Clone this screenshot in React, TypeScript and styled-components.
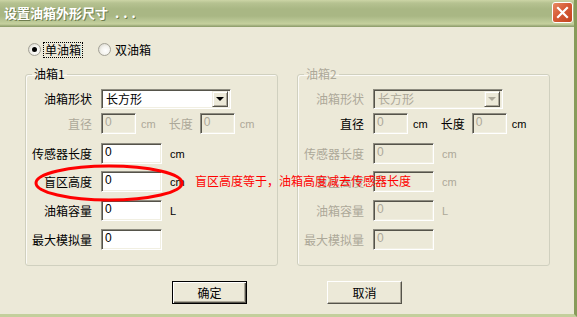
import React from "react";
import styled, { createGlobalStyle } from "styled-components";

const GlobalStyle = createGlobalStyle`
  html, body {
    margin: 0;
    padding: 0;
    background: #ece9d8;
  }
  body {
    font-family: "Noto Sans CJK SC", "Liberation Sans", sans-serif;
    font-size: 12px;
  }
`;

const Window = styled.div`
  position: relative;
  width: 577px;
  height: 317px;
  box-sizing: border-box;
  display: flex;
  flex-direction: column;
  background: #ece9d8;
  border-right: 3px solid #879b5a;
  border-bottom: 3px solid #c3cf9c;
  overflow: hidden;
`;

const TitleBar = styled.div`
  height: 27px;
  flex: none;
  box-sizing: border-box;
  display: flex;
  align-items: center;
  justify-content: space-between;
  padding: 0 1px 1px 4px;
  background: linear-gradient(
    to bottom,
    #ccd5a6 0px,
    #b6c291 3px,
    #a9b784 9px,
    #a9b784 16px,
    #bac795 21px,
    #c6d19e 24px,
    #9aa877 26px,
    #8c9b68 27px
  );
`;

const Title = styled.span`
  color: #fff;
  font-weight: bold;
  font-size: 13px;
  line-height: 16px;
  text-shadow: 1px 1px 0 #6f7d4f;
  white-space: pre;
`;

const TitleDots = styled.span`
  margin-left: 7px;
  letter-spacing: 4px;
`;

const CloseButton = styled.div`
  width: 21px;
  height: 21px;
  margin-bottom: 2px;
  box-sizing: border-box;
  border: 1px solid #fff;
  border-radius: 3px;
  background: linear-gradient(135deg, #e88a64 0%, #d65b36 45%, #c2441f 100%);
  display: flex;
  align-items: center;
  justify-content: center;
`;

const Body = styled.div`
  flex: 1;
  display: flex;
  flex-direction: column;
  padding-top: 14px;
`;

const RadioRow = styled.div`
  display: flex;
  align-items: center;
  height: 17px;
  padding-left: 28px;
  gap: 16px;
`;

const RadioItem = styled.label`
  display: flex;
  align-items: center;
  gap: 3px;
`;

const RadioCircle = styled.span<{ $checked?: boolean }>`
  width: 13px;
  height: 13px;
  box-sizing: border-box;
  border-radius: 50%;
  border: 1px solid #a3a196;
  background: radial-gradient(circle at 60% 60%, #ffffff 0%, #f4f3ee 45%, #cfcdc2 100%);
  display: flex;
  align-items: center;
  justify-content: center;
  &::after {
    content: "";
    display: ${(p) => (p.$checked ? "block" : "none")};
    width: 5px;
    height: 5px;
    border-radius: 50%;
    background: #000;
  }
`;

const RadioText = styled.span<{ $focused?: boolean }>`
  line-height: 14px;
  padding: 0 1px;
  color: #000;
  outline: ${(p) => (p.$focused ? "1px dotted #000" : "none")};
  outline-offset: 0;
`;

const GroupsRow = styled.div`
  display: flex;
  gap: 19px;
  padding-left: 25px;
  margin-top: 9px;
`;

const Group = styled.fieldset`
  width: 253px;
  height: 199px;
  box-sizing: border-box;
  margin: 0;
  padding: 0;
  border: 1px solid #d0d0bf;
  border-radius: 3px;
  box-shadow: inset 1px 1px 0 #fbfaf6;
  display: flex;
  flex-direction: column;
`;

const Legend = styled.legend<{ $disabled?: boolean }>`
  margin-left: 6px;
  padding: 0 2px;
  font-size: 12px;
  line-height: 14px;
  color: ${(p) => (p.$disabled ? "#aca899" : "#000")};
`;

const FormRow = styled.div<{ $mt: number }>`
  display: flex;
  align-items: center;
  height: 21px;
  margin-top: ${(p) => p.$mt}px;
`;

const Label = styled.span<{ $disabled?: boolean; $w?: number; $mr?: number }>`
  width: ${(p) => (p.$w ?? 66)}px;
  margin-right: ${(p) => (p.$mr ?? 9)}px;
  text-align: right;
  line-height: 21px;
  white-space: nowrap;
  color: ${(p) => (p.$disabled ? "#aca899" : "#000")};
`;

const TextBox = styled.div<{ $w: number; $disabled?: boolean }>`
  width: ${(p) => p.$w}px;
  height: 21px;
  box-sizing: border-box;
  border-style: solid;
  border-width: 1px;
  border-color: #8e8c80 #ffffff #ffffff #8e8c80;
  box-shadow: inset 1px 1px 0 #55534a, inset -1px -1px 0 #f1efe2;
  background: ${(p) => (p.$disabled ? "#ece9d8" : "#fff")};
  color: ${(p) => (p.$disabled ? "#aca899" : "#000")};
  font-family: "Liberation Sans", sans-serif;
  font-size: 12px;
  line-height: 17px;
  padding-left: 3px;
`;

const Unit = styled.span<{ $ml?: number; $disabled?: boolean }>`
  margin-left: ${(p) => (p.$ml ?? 8)}px;
  font-family: "Liberation Sans", sans-serif;
  font-size: 11px;
  color: ${(p) => (p.$disabled ? "#aca899" : "#000")};
`;

const InlineLabel = styled.span<{ $ml: number; $disabled?: boolean }>`
  margin-left: ${(p) => p.$ml}px;
  margin-right: 7px;
  color: ${(p) => (p.$disabled ? "#aca899" : "#000")};
`;

const Combo = styled.div<{ $disabled?: boolean }>`
  width: 130px;
  height: 20px;
  box-sizing: border-box;
  border-style: solid;
  border-width: 1px;
  border-color: #8e8c80 #ffffff #ffffff #8e8c80;
  box-shadow: inset 1px 1px 0 #55534a, inset -1px -1px 0 #f1efe2;
  background: ${(p) => (p.$disabled ? "#ece9d8" : "#fff")};
  color: ${(p) => (p.$disabled ? "#aca899" : "#000")};
  display: flex;
  align-items: center;
  justify-content: space-between;
  padding: 2px 2px 2px 4px;
  line-height: 14px;
`;

const DropButton = styled.div<{ $disabled?: boolean }>`
  width: 16px;
  height: 16px;
  box-sizing: border-box;
  background: #ece9d8;
  border-style: solid;
  border-width: 1px;
  border-color: #f1efe2 #55534a #55534a #f1efe2;
  box-shadow: inset 1px 1px 0 #fff, inset -1px -1px 0 #aca899;
  display: flex;
  align-items: center;
  justify-content: center;
  &::after {
    content: "";
    border-left: 4px solid transparent;
    border-right: 4px solid transparent;
    border-top: 4px solid ${(p) => (p.$disabled ? "#aca899" : "#000")};
    margin-top: 1px;
  }
`;

const ButtonRow = styled.div`
  display: flex;
  gap: 80px;
  padding-left: 172px;
  margin-top: 15px;
`;

const PushButton = styled.div<{ $default?: boolean }>`
  width: 75px;
  height: 23px;
  box-sizing: border-box;
  background: #ece9d8;
  border: 1px solid;
  border-color: ${(p) => (p.$default ? "#000" : "#fff #55534a #55534a #fff")};
  box-shadow: ${(p) =>
    p.$default
      ? "inset 1px 1px 0 #fff, inset -1px -1px 0 #55534a, inset -2px -2px 0 #aca899"
      : "inset -1px -1px 0 #aca899"};
  display: flex;
  align-items: center;
  justify-content: center;
  color: #000;
  line-height: 14px;
`;

const Ellipse = styled.svg`
  position: absolute;
  left: 33px;
  top: 163px;
  pointer-events: none;
`;

const Note = styled.span`
  position: absolute;
  left: 195px;
  top: 174px;
  color: #ff0000;
  font-size: 12px;
  line-height: 14px;
  white-space: nowrap;
`;

type TankProps = { index: number; disabled?: boolean };

const TankGroup: React.FC<TankProps> = ({ index, disabled }) => (
  <Group>
    <Legend $disabled={disabled}>油箱{index}</Legend>
    <FormRow $mt={7}>
      <Label $disabled={disabled}>油箱形状</Label>
      <Combo $disabled={disabled}>
        <span>长方形</span>
        <DropButton $disabled={disabled} />
      </Combo>
    </FormRow>
    <FormRow $mt={4}>
      <Label $disabled={!disabled}>直径</Label>
      <TextBox $w={35} $disabled>0</TextBox>
      <Unit $ml={5} $disabled={!disabled}>cm</Unit>
      <InlineLabel $ml={13} $disabled={!disabled}>长度</InlineLabel>
      <TextBox $w={35} $disabled>0</TextBox>
      <Unit $ml={5} $disabled={!disabled}>cm</Unit>
    </FormRow>
    <FormRow $mt={9}>
      <Label $disabled={disabled}>传感器长度</Label>
      <TextBox $w={61} $disabled={disabled}>0</TextBox>
      <Unit $disabled={disabled}>cm</Unit>
    </FormRow>
    <FormRow $mt={7}>
      <Label $disabled={disabled}>盲区高度</Label>
      <TextBox $w={61} $disabled={disabled}>0</TextBox>
      <Unit $disabled={disabled}>cm</Unit>
    </FormRow>
    <FormRow $mt={8}>
      <Label $disabled={disabled}>油箱容量</Label>
      <TextBox $w={61} $disabled={disabled}>0</TextBox>
      <Unit $disabled={disabled}>L</Unit>
    </FormRow>
    <FormRow $mt={8}>
      <Label $disabled={disabled}>最大模拟量</Label>
      <TextBox $w={61} $disabled={disabled}>0</TextBox>
    </FormRow>
  </Group>
);

export default function App() {
  return (
    <>
      <GlobalStyle />
      <Window>
        <TitleBar>
          <Title>
            设置油箱外形尺寸<TitleDots>...</TitleDots>
          </Title>
          <CloseButton>
            <svg width="13" height="13" viewBox="0 0 13 13">
              <path d="M2 2 L11 11 M11 2 L2 11" stroke="#fff" strokeWidth="2.2" strokeLinecap="square" />
            </svg>
          </CloseButton>
        </TitleBar>
        <Body>
          <RadioRow>
            <RadioItem>
              <RadioCircle $checked />
              <RadioText $focused>单油箱</RadioText>
            </RadioItem>
            <RadioItem>
              <RadioCircle />
              <RadioText>双油箱</RadioText>
            </RadioItem>
          </RadioRow>
          <GroupsRow>
            <TankGroup index={1} />
            <TankGroup index={2} disabled />
          </GroupsRow>
          <ButtonRow>
            <PushButton $default>确定</PushButton>
            <PushButton>取消</PushButton>
          </ButtonRow>
        </Body>
        <Ellipse width="152" height="40" viewBox="0 0 152 40">
          <ellipse cx="76" cy="20" rx="73" ry="17" fill="none" stroke="#ff0000" strokeWidth="3" />
        </Ellipse>
        <Note>盲区高度等于，油箱高度减去传感器长度</Note>
      </Window>
    </>
  );
}
